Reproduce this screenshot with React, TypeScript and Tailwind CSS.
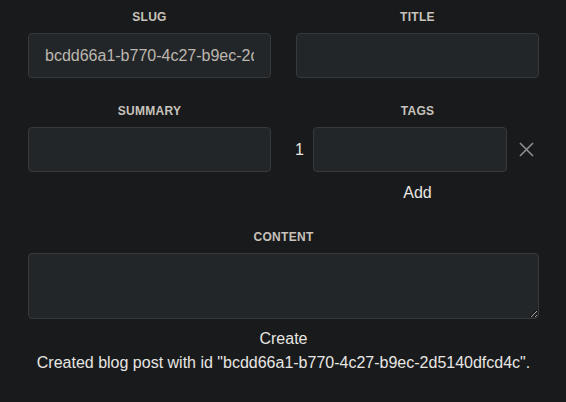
import React from 'react';

const labelCls =
  'block text-center text-[12px] leading-4 font-bold uppercase tracking-wide text-[#c8c3bc] mb-[8px]';
const inputCls =
  'w-full h-[45px] rounded-[4px] border border-[#363a3d] bg-[#232629] px-4 text-[16px] text-[#bdb7af] outline-none';

const App = () => {
  return (
    <div
      className="min-h-[402px] bg-[#181a1b] text-[#e8e6e3] pl-[28px] pr-[27px] pt-[9px]"
      style={{ fontFamily: '"Liberation Sans", Arial, sans-serif' }}
    >
      <form className="grid grid-cols-2 gap-x-[25px]">
        {/* Slug */}
        <div>
          <label className={labelCls}>Slug</label>
          <input className={inputCls} readOnly value="bcdd66a1-b770-4c27-b9ec-2d5140dfcd4c" />
        </div>

        {/* Title */}
        <div>
          <label className={labelCls}>Title</label>
          <input className={inputCls} />
        </div>

        {/* Summary */}
        <div className="mt-[25px]">
          <label className={labelCls}>Summary</label>
          <input className={inputCls} />
        </div>

        {/* Tags */}
        <div className="mt-[25px]">
          <label className={labelCls}>Tags</label>
          <div className="flex items-center -ml-[1px]">
            <span className="text-[16px] w-[9px] mr-[9px]">1</span>
            <input className={inputCls + ' !w-[194px]'} />
            <button type="button" className="ml-[11px] text-[#8f8f8f]">
              <svg width="17" height="17" viewBox="0 0 17 17" fill="none" stroke="currentColor" strokeWidth="1.6">
                <path d="M2 2L15 15M15 2L2 15" />
              </svg>
            </button>
          </div>
          <div className="text-center text-[16px] leading-[18px] mt-[12px]">Add</div>
        </div>

        {/* Content */}
        <div className="col-span-2 mt-[27px]">
          <label className={labelCls}>Content</label>
          <textarea className="block w-full h-[66px] rounded-[4px] border border-[#363a3d] bg-[#232629] outline-none" />
        </div>
      </form>

      <div className="text-center text-[16px] leading-[18px] mt-[11px]">Create</div>
      <p className="text-center text-[16px] leading-[18px] mt-[6px]">
        Created blog post with id "bcdd66a1-b770-4c27-b9ec-2d5140dfcd4c".
      </p>
    </div>
  );
};

export default App;
